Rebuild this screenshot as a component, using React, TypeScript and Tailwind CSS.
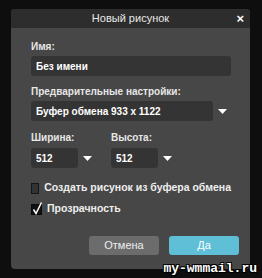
import React from "react";

function Arrow() {
  return (
    <svg width="9" height="5" viewBox="0 0 9 5" className="block">
      <polygon points="0,0 9,0 4.5,5" fill="#ffffff" />
    </svg>
  );
}

export default function App() {
  const font = { fontFamily: '"Liberation Sans", Arial, sans-serif' };
  return (
    <div className="relative w-[262px] h-[278px] bg-[#0e0e0e] pt-[9px] pl-[11px]" style={font}>
      <div className="w-[239px] h-[260px] bg-[#474747] rounded-[4px] overflow-hidden flex flex-col">
        <div className="relative h-[19px] bg-[#2d2d2d] flex items-center justify-center text-[11px] text-[#e8e8e8]">
          <span>Новый рисунок</span>
          <span className="absolute right-[6px] top-[2px] text-[13px] font-bold text-white leading-[15px]">×</span>
        </div>
        <div className="flex flex-col pl-[20px] pr-[19px] pt-[12px] text-[10px] text-[#e6e6e6] whitespace-nowrap">
          <div className="font-bold leading-[14px] h-[14px]">Имя:</div>
          <div className="mt-[2px] h-[20px] w-[200px] bg-[#343434] rounded-[3px] flex items-center pl-[5px] font-bold text-white">
            Без имени
          </div>
          <div className="mt-[9px] font-bold leading-[14px] h-[14px]">Предварительные настройки:</div>
          <div className="mt-[2px] flex items-center">
            <div className="h-[20px] w-[182px] bg-[#343434] rounded-[3px] flex items-center pl-[5px] font-bold text-white">
              Буфер обмена 933 x 1122
            </div>
            <div className="ml-[5px]"><Arrow /></div>
          </div>
          <div className="mt-[10px] flex">
            <div className="flex flex-col w-[80px]">
              <div className="font-bold leading-[14px] h-[14px]">Ширина:</div>
              <div className="mt-[3px] flex items-center">
                <div className="h-[20px] w-[47px] bg-[#343434] rounded-[3px] flex items-center pl-[5px] font-bold text-white">512</div>
                <div className="ml-[5px]"><Arrow /></div>
              </div>
            </div>
            <div className="flex flex-col">
              <div className="font-bold leading-[14px] h-[14px]">Высота:</div>
              <div className="mt-[3px] flex items-center">
                <div className="h-[20px] w-[47px] bg-[#343434] rounded-[3px] flex items-center pl-[5px] font-bold text-white">512</div>
                <div className="ml-[5px]"><Arrow /></div>
              </div>
            </div>
          </div>
          <div className="mt-[14px] flex items-center h-[12px]">
            <div className="w-[11px] h-[11px] bg-[#333333] border border-[#161616]" />
            <span className="ml-[5px] font-bold text-[#eeeeee] text-[10.5px]">Создать рисунок из буфера обмена</span>
          </div>
          <div className="mt-[9px] flex items-center h-[12px]">
            <div className="relative w-[11px] h-[11px] bg-[#111111] border border-[#0a0a0a]">
              <svg width="11" height="13" viewBox="0 0 11 13" className="absolute left-[0px] top-[-3px]">
                <path d="M1.5 7.5 L4 11.5 L9.5 0.5" stroke="#ffffff" strokeWidth="1.5" fill="none" />
              </svg>
            </div>
            <span className="ml-[5px] font-bold text-[#eeeeee] text-[10.5px]">Прозрачность</span>
          </div>
          <div className="mt-[21px] flex justify-end gap-[10px] mr-[-8px]">
            <div className="w-[70px] h-[19px] bg-[#6c6c6c] rounded-[3px] flex items-center justify-center text-[11px] text-[#eeeeee]">Отмена</div>
            <div className="w-[70px] h-[19px] bg-[#5ebfd7] rounded-[3px] flex items-center justify-center text-[11px] text-white">Да</div>
          </div>
        </div>
      </div>
      <div
        className="absolute right-[5px] bottom-[2px] text-[13px] font-bold text-white leading-[14px]"
        style={{ fontFamily: '"Liberation Mono", "Courier New", monospace', textShadow: "1px 1px 0 #000, -1px -1px 0 #000, 1px -1px 0 #000, -1px 1px 0 #000" }}
      >
        my-wmmail.ru
      </div>
    </div>
  );
}
